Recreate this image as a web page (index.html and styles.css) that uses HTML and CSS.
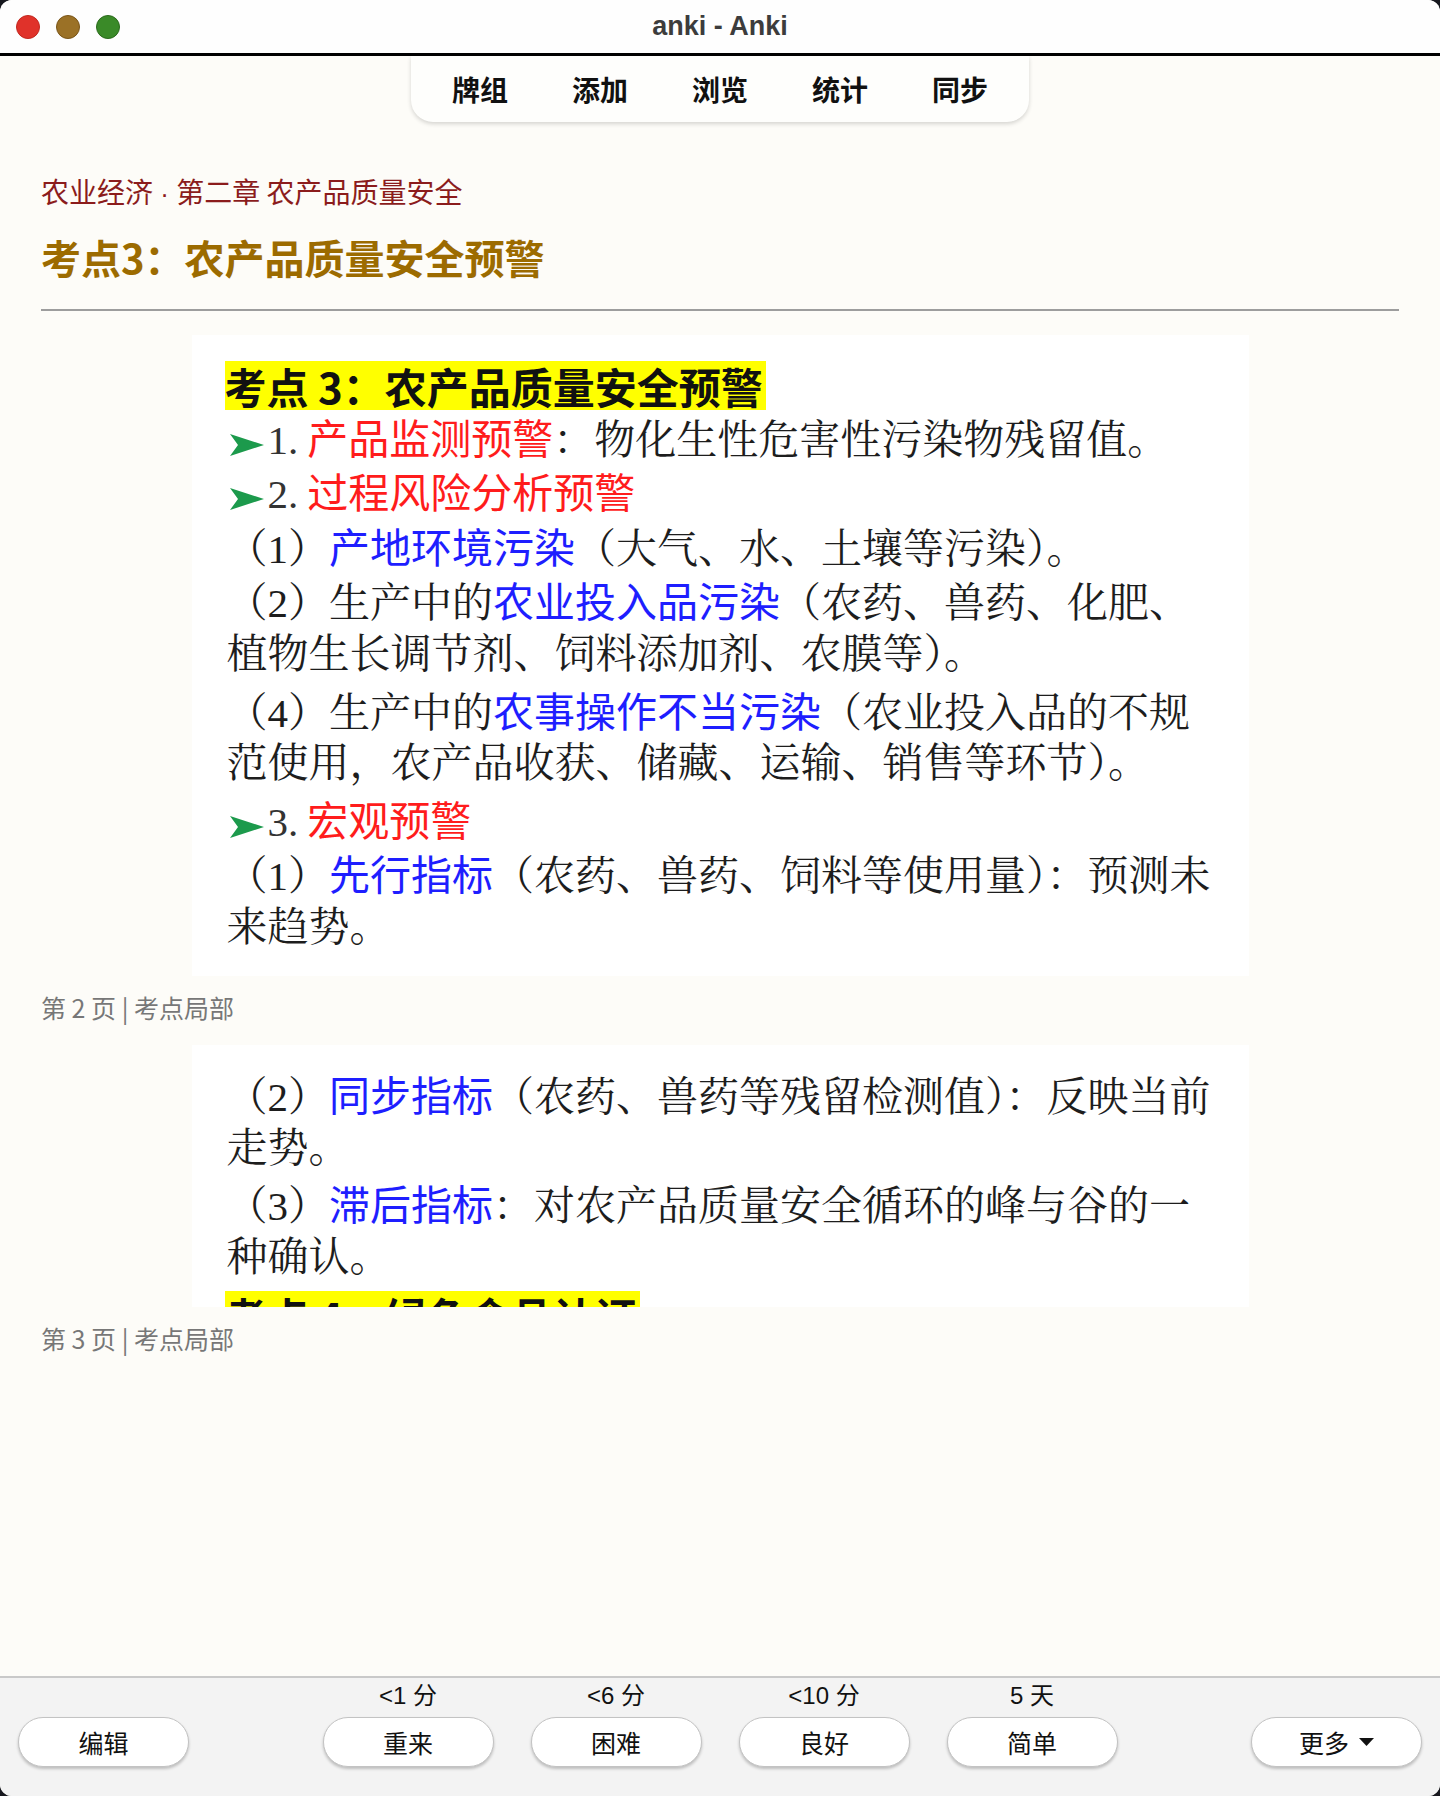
FILE: index.html
```html
<!DOCTYPE html>
<html lang="zh-CN">
<head>
<meta charset="utf-8">
<title>anki - Anki</title>
<link rel="stylesheet" href="styles.css">
</head>
<body>
<div class="window">
  <header class="titlebar">
    <div class="lights">
      <span class="light red"></span>
      <span class="light amber"></span>
      <span class="light green"></span>
    </div>
    <div class="title">anki - Anki</div>
    <div></div>
  </header>

  <main class="main">
    <nav class="tabs">
      <span class="tab">牌组</span>
      <span class="tab">添加</span>
      <span class="tab">浏览</span>
      <span class="tab">统计</span>
      <span class="tab">同步</span>
    </nav>

    <section class="card">
      <div class="crumb">农业经济<span class="dot"> · </span>第二章 农产品质量安全</div>
      <h1 class="heading">考点3：农产品质量安全预警</h1>
      <hr class="rule">

      <figure class="slide s1">
        <div class="ln"><span class="hl">考点 3：农产品质量安全预警</span></div>
        <div class="ln"><svg class="arr" viewBox="0 0 34 22" width="34" height="22"><polygon points="0,0 34,11 0,22 8,11" fill="#1c9a4c"/></svg><span class="num">1.</span><span class="r">产品监测预警</span>：物化生性危害性污染物残留值。</div>
        <div class="ln"><svg class="arr" viewBox="0 0 34 22" width="34" height="22"><polygon points="0,0 34,11 0,22 8,11" fill="#1c9a4c"/></svg><span class="num">2.</span><span class="r">过程风险分析预警</span></div>
        <div class="ln">（1）<span class="b">产地环境污染</span>（大气、水、土壤等污染）。</div>
        <div class="ln">（2）生产中的<span class="b">农业投入品污染</span>（农药、兽药、化肥、</div>
        <div class="ln">植物生长调节剂、饲料添加剂、农膜等）。</div>
        <div class="ln">（4）生产中的<span class="b">农事操作不当污染</span>（农业投入品的不规</div>
        <div class="ln">范使用，农产品收获、储藏、运输、销售等环节）。</div>
        <div class="ln"><svg class="arr" viewBox="0 0 34 22" width="34" height="22"><polygon points="0,0 34,11 0,22 8,11" fill="#1c9a4c"/></svg><span class="num">3.</span><span class="r">宏观预警</span></div>
        <div class="ln">（1）<span class="b">先行指标</span>（农药、兽药、饲料等使用量）：预测未</div>
        <div class="ln">来趋势。</div>
      </figure>
      <div class="caption">第 2 页 | 考点局部</div>

      <figure class="slide s2">
        <div class="ln">（2）<span class="b">同步指标</span>（农药、兽药等残留检测值）：反映当前</div>
        <div class="ln">走势。</div>
        <div class="ln">（3）<span class="b">滞后指标</span>：对农产品质量安全循环的峰与谷的一</div>
        <div class="ln">种确认。</div>
        <div class="ln"><span class="hl hl2">考点 4　绿色食品认证</span></div>
      </figure>
      <div class="caption">第 3 页 | 考点局部</div>
    </section>
  </main>

  <footer class="bar">
    <button class="btn">编辑</button>
    <div class="answers">
      <div class="ans"><span class="due">&lt;1 分</span><button class="btn">重来</button></div>
      <div class="ans"><span class="due">&lt;6 分</span><button class="btn">困难</button></div>
      <div class="ans"><span class="due">&lt;10 分</span><button class="btn">良好</button></div>
      <div class="ans"><span class="due">5 天</span><button class="btn">简单</button></div>
    </div>
    <button class="btn">更多<svg class="caret" viewBox="0 0 15 8" width="15" height="8"><polygon points="0,0 15,0 7.5,8" fill="#111"/></svg></button>
  </footer>
</div>
</body>
</html>
```
FILE: styles.css
```css
html, body {
  margin: 0;
  padding: 0;
  background: #17181e;
}

.window {
  width: 1440px;
  height: 1796px;
  border-radius: 12px;
  overflow: hidden;
  display: flex;
  flex-direction: column;
  background: #fdfcf8;
  font-family: "Noto Sans CJK SC", "Liberation Sans", sans-serif;
}

/* title bar */
.titlebar {
  height: 53px;
  flex: none;
  border-bottom: 3px solid #000;
  background: #fefefe;
  display: grid;
  grid-template-columns: 1fr auto 1fr;
  align-items: center;
}
.lights {
  display: flex;
  gap: 16px;
  padding-left: 16px;
}
.light {
  width: 24px;
  height: 24px;
  border-radius: 50%;
  box-sizing: border-box;
  border: 1px solid;
}
.light.red { background: #e0322a; border-color: #c2281f; }
.light.amber { background: #9b7126; border-color: #7a5518; }
.light.green { background: #3a8a28; border-color: #2b6a1c; }
.title {
  font-family: "Liberation Sans", "Noto Sans", sans-serif;
  font-weight: 700;
  font-size: 27px;
  color: #3c3c3c;
}

/* main area */
.main {
  flex: 1;
  display: flex;
  flex-direction: column;
  background: #fdfcf8;
}
.tabs {
  align-self: center;
  width: 618px;
  height: 66px;
  box-sizing: border-box;
  padding: 0 9px;
  display: flex;
  background: #fefefc;
  border-radius: 0 0 22px 22px;
  box-shadow: 0 2px 4px rgba(0, 0, 0, 0.16);
}
.tab {
  width: 120px;
  display: flex;
  align-items: center;
  justify-content: center;
  font-weight: 700;
  font-size: 28px;
  color: #111;
}

.card {
  padding: 0 41px;
}
.crumb {
  margin-top: 49px;
  height: 40px;
  font-size: 28px;
  line-height: 40px;
  color: #8b1c1c;
}
.dot {
  font-family: "Liberation Sans", sans-serif;
  font-size: 26px;
  line-height: 1;
}
.heading {
  margin: 20px 0 0;
  height: 52px;
  font-size: 40px;
  line-height: 52px;
  font-weight: 700;
  color: #9c6b00;
}
.rule {
  margin: 26px 0 0;
  border: 0;
  height: 2px;
  background: #9d9d9d;
}

.slide {
  margin: 24px auto 0;
  width: 1057px;
  box-sizing: border-box;
  background: #ffffff;
  padding: 19px 0 0 35px;
  overflow: hidden;
  font-family: "Liberation Serif", "Noto Serif CJK SC", "Noto Sans CJK SC", serif;
  font-size: 41px;
  color: #1d1d1d;
}
.s1 { height: 641px; }
.s2 { height: 262px; margin-top: 21px; padding-top: 21px; }

.ln {
  height: 54.6px;
  line-height: 54.6px;
  white-space: nowrap;
}
.hl {
  display: inline-block;
  vertical-align: middle;
  margin-left: -2px;
  padding-right: 3px;
  line-height: 49px;
  background: #ffff00;
  font-family: "Noto Sans CJK SC", sans-serif;
  font-weight: 700;
  font-size: 42px;
  color: #111;
}
.hl2 {
  min-width: 411px;
  box-sizing: border-box;
}
.arr {
  vertical-align: -2px;
  margin: 0 4px 0 3px;
}
.num {
  color: #333;
  margin-right: 9px;
}
.r {
  color: #ff1c1c;
  font-family: "Noto Sans CJK SC", sans-serif;
}
.b {
  color: #1e1eff;
  font-family: "Noto Sans CJK SC", sans-serif;
}

.caption {
  margin-top: 14px;
  height: 34px;
  font-size: 25px;
  line-height: 34px;
  color: #777;
}

/* bottom bar */
.bar {
  flex: none;
  height: 120px;
  box-sizing: border-box;
  border-top: 2px solid #c9c9c9;
  background: #f3f3f3;
  display: flex;
  justify-content: space-between;
  align-items: flex-end;
  padding: 3px 18px 29px;
}
.answers {
  display: flex;
  gap: 37px;
}
.ans {
  display: flex;
  flex-direction: column;
  align-items: center;
  gap: 6px;
}
.due {
  font-family: "Liberation Sans", "Noto Sans CJK SC", sans-serif;
  font-size: 24px;
  line-height: 30px;
  color: #111;
}
.btn {
  width: 171px;
  height: 50px;
  box-sizing: border-box;
  border: 1px solid #c3c3c3;
  border-radius: 25px;
  background: #fff;
  box-shadow: 0 2px 3px rgba(0, 0, 0, 0.22);
  display: flex;
  align-items: center;
  justify-content: center;
  gap: 10px;
  padding: 0;
  font-family: "Noto Sans CJK SC", sans-serif;
  font-size: 25px;
  color: #111;
}
.caret {
  display: block;
}
```
